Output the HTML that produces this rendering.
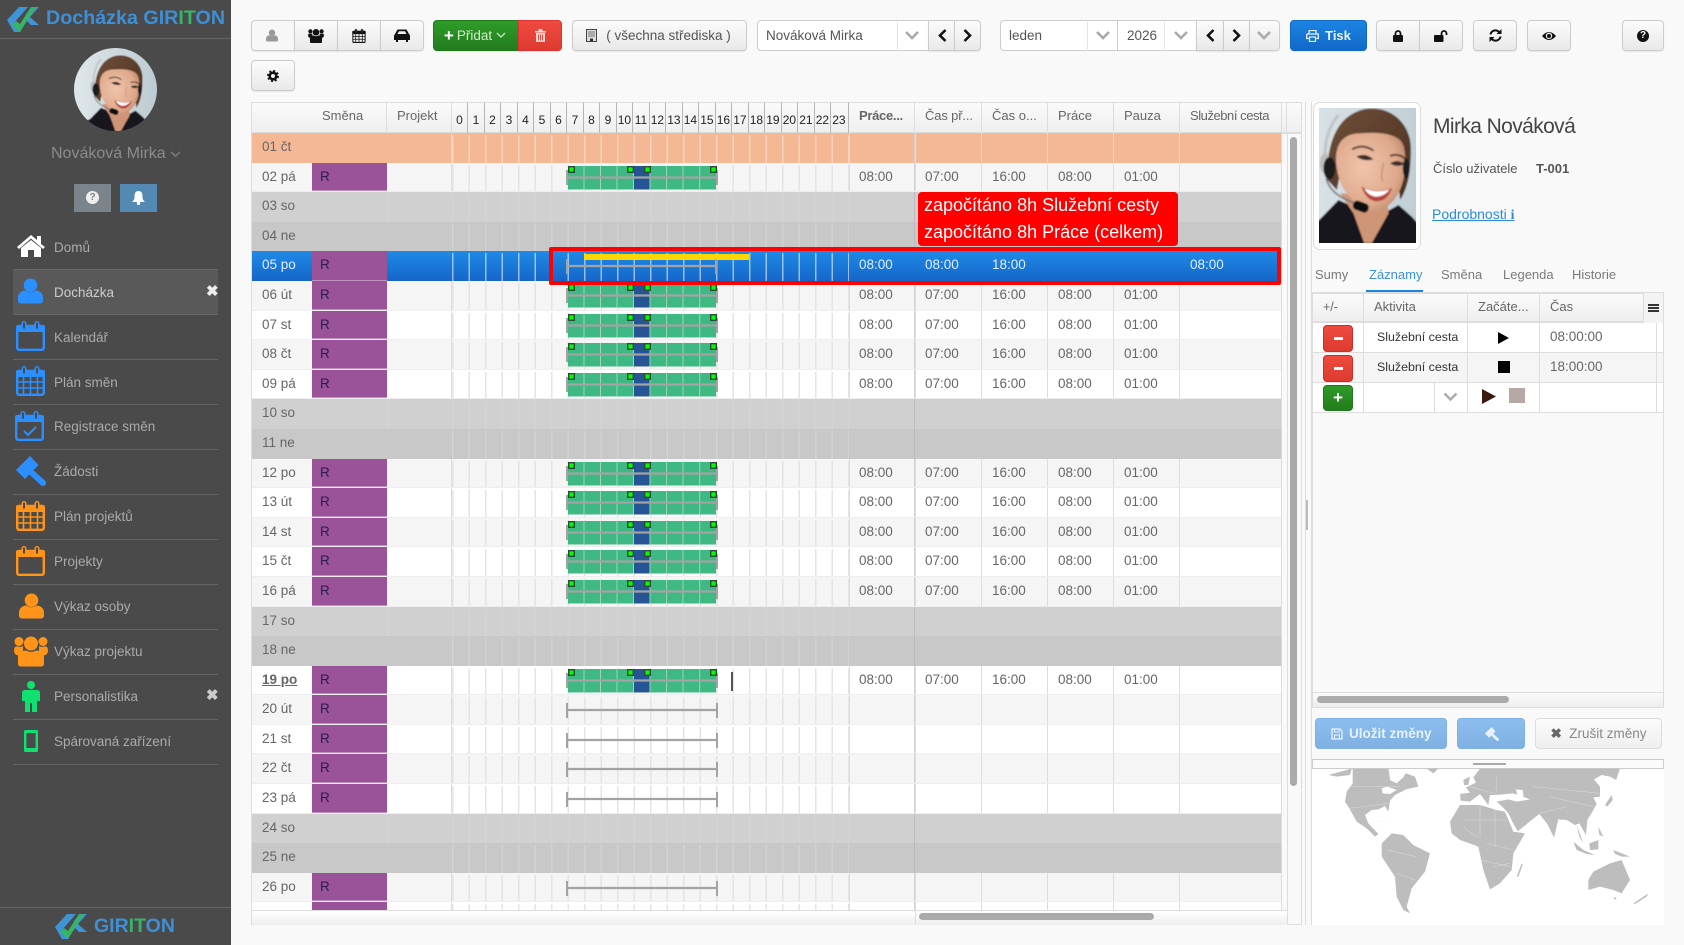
<!DOCTYPE html>
<html lang="cs"><head><meta charset="utf-8"><title>Docházka GIRITON</title>
<style>
*{box-sizing:border-box}
html,body{margin:0;padding:0;width:1684px;height:945px;overflow:hidden;background:#f9f9f9;font:13.5px "Liberation Sans",sans-serif;color:#555}
.a{position:absolute}
#side{position:absolute;left:0;top:0;width:231px;height:945px;background:#4a4a4a}
.nav{position:absolute;left:54px;color:#aaa;font-size:13.5px;line-height:18px;white-space:nowrap}
.dv{position:absolute;left:13px;width:205px;height:1px;background:#646464}
.ic{position:absolute}
.btn{position:absolute;top:20px;height:31px;background:linear-gradient(#fbfbfb,#e9e9e9);border:1px solid #ccc;border-radius:4px;box-shadow:0 1px 1px rgba(0,0,0,.08);display:flex;align-items:center;justify-content:center;color:#111}
.btn.l{border-radius:4px 0 0 4px}.btn.m{border-radius:0}.btn.rr{border-radius:0 4px 4px 0}
.inp{position:absolute;top:20px;height:31px;background:#fff;border:1px solid #ccc;color:#555;font-size:13.5px;line-height:29px;padding-left:8px}
.sep{position:absolute;top:1px;bottom:1px;width:1px;background:#e2e2e2}
.chev{position:absolute;fill:none;stroke:#aaa;stroke-width:2.6}
.th{position:absolute;top:102px;height:32px;background:linear-gradient(#fafafa,#efefef);border:1px solid #ddd;border-left:0;border-bottom:2px solid #ddd;font-size:13px;line-height:26px;color:#666;padding-left:10px;white-space:nowrap}
.hh{position:absolute;top:102px;height:32px;width:16.5px;background:linear-gradient(#fafafa,#efefef);border-top:1px solid #ddd;border-bottom:2px solid #ddd;border-right:1px solid #b5b5b5;font-size:12px;line-height:34px;color:#222;text-align:center}
#tb{position:absolute;left:252px;top:133px;width:1030px;height:777px;overflow:hidden}
.r{position:relative;height:29.6px;width:1030px;overflow:hidden}
.r::after{content:"";position:absolute;left:597px;top:0;bottom:0;width:433px;background:linear-gradient(#ddd,#ddd) 66px 0/1px 100% no-repeat,linear-gradient(#ddd,#ddd) 132px 0/1px 100% no-repeat,linear-gradient(#ddd,#ddd) 198px 0/1px 100% no-repeat,linear-gradient(#ddd,#ddd) 264px 0/1px 100% no-repeat,linear-gradient(#ddd,#ddd) 330px 0/1px 100% no-repeat,linear-gradient(#ddd,#ddd) 0 0/1px 100% no-repeat,linear-gradient(#d2d2d2,#d2d2d2) 65px 0/2px 100% no-repeat}
.a1{background:#f5f5f5}.b1{background:#fff}
.e1{background:#d0d0d0}.f1{background:#c8c8c8}.p1{background:#f5b895}
.a1,.b1{border-bottom:1px solid #eee}
.e1::after,.f1::after{background:linear-gradient(#bbb,#bbb) 65px 0/1px 100% no-repeat}
.s1{background:linear-gradient(#1f8ae6,#1566c9)}
.s1::after{background:none}
.d{position:absolute;left:10px;top:0;line-height:28px;font-size:13.5px;color:#666;font-weight:400}
.sc{position:absolute;left:60px;top:0;width:75px;height:100%;background:#9a5299;border-bottom:1px solid #c090be;color:#2a1a55;line-height:28px;padding-left:8px;font-size:13.5px;font-style:normal}
.h{position:absolute;left:199.7px;top:2px;bottom:0;width:397px;background:linear-gradient(90deg,#e4e4e4 1.6px,transparent 1.6px) 0 0/16.5px 100%}
.prj{position:absolute;left:135px;top:0;width:65px;height:100%;border-right:1px solid #ddd}
.e1 .h,.e1 .prj{background-image:linear-gradient(90deg,#d4d4d4 1.6px,transparent 1.6px);border:0}
.f1 .h{background-image:linear-gradient(90deg,#d2d2d2 1.6px,transparent 1.6px)}.f1 .prj{border:0}
.p1 .h{background-image:linear-gradient(90deg,#f9d3bd 1.6px,transparent 1.6px)}
.s1 .h{background-image:linear-gradient(90deg,rgba(255,255,255,.55) 1.4px,transparent 1.4px)}.s1 .prj{border:0}
.bar{position:absolute;left:314.5px;top:0;width:155px;height:30px;overflow:visible}
.t{position:absolute;top:0;line-height:28px;font-size:13.5px;color:#666;z-index:2}
.t1{left:607px}.t2{left:673px}.t3{left:740px}.t4{left:806px}.t5{left:872px}.t6{left:938px}
.s1 .t,.s1 .d{color:#dfeeff}
.tab{position:absolute;top:266px;font-size:13px;color:#7a7a7a;line-height:17px}
.pc{position:absolute;background:#fff;border-bottom:1px solid #ddd}
.pl{position:absolute;width:1px;background:#ddd}
.red{position:absolute;left:1323px;width:30px;height:27px;border-radius:4px;background:linear-gradient(#ee4a40,#dd3a30);border:1px solid #c9302c}
.red::after{content:"";position:absolute;left:10px;top:11px;width:9px;height:3px;background:#fff}
</style></head><body>
<svg width="0" height="0" style="position:absolute">
<defs>
<radialGradient id="sk" cx=".4" cy=".45" r=".7"><stop offset="0" stop-color="#f0c4ab"/><stop offset=".7" stop-color="#dea98c"/><stop offset="1" stop-color="#b98264"/></radialGradient>
<linearGradient id="bgp" x1="0" x2="1"><stop offset="0" stop-color="#e3eaed"/><stop offset="1" stop-color="#b8c8cf"/></linearGradient>
<linearGradient id="hr" x1="0" x2="1" y1="0" y2="1"><stop offset="0" stop-color="#6f4e38"/><stop offset="1" stop-color="#4a2f20"/></linearGradient>
<filter id="bl" x="-5%" y="-5%" width="110%" height="110%"><feGaussianBlur stdDeviation="2.5"/></filter>
<g id="woman"><g filter="url(#bl)">
<rect x="100" y="250" width="550" height="520" fill="url(#bgp)"/>
<path d="M100 770V720L237 660 295 600 340 620 385 700 430 640 475 615 515 650 560 700V770Z" fill="#14141a"/>
<path d="M300 580L440 590 445 640 395 729 372 729 340 640Z" fill="#cf9577"/>
<path d="M262 540C258 430 290 345 375 327 460 315 515 380 512 450 512 510 505 560 480 600L460 420 320 420 290 570Z" fill="url(#hr)"/>
<path d="M288 490C283 420 320 400 360 400 420 395 485 400 492 445 505 520 482 590 442 618 410 640 360 632 330 592 300 560 293 530 288 490Z" fill="url(#sk)"/>
<path d="M336 448Q368 430 400 452M450 468Q475 458 497 478" stroke="#5a3b2c" stroke-width="6" fill="none"/>
<path d="M348 470Q375 456 400 478 372 486 348 470ZM450 490Q472 476 494 492 470 504 450 490Z" fill="#3f2d27"/>
<path d="M430 490Q420 530 428 545" stroke="#c48d70" stroke-width="4" fill="none"/>
<path d="M364 560Q410 582 456 564 442 606 405 604 376 598 364 560Z" fill="#b8453f"/>
<path d="M372 565Q410 580 448 569 432 590 405 590 384 586 372 565Z" fill="#fff"/>
<path d="M295 345Q248 400 256 490" stroke="#c4c4c4" stroke-width="9" fill="none"/>
<ellipse cx="255" cy="490" rx="16" ry="30" fill="#bdbdbd"/>
<ellipse cx="268" cy="505" rx="18" ry="34" fill="#1c1c1c"/><ellipse cx="498" cy="505" rx="10" ry="30" fill="#1c1c1c"/>
<path d="M258 535Q270 585 345 610" stroke="#777" stroke-width="5" fill="none"/>
<rect x="338" y="606" width="48" height="28" rx="12" fill="#111" transform="rotate(20 362 620)"/>
</g></g>
<symbol id="u" viewBox="0 0 24 24"><circle cx="12" cy="6.5" r="6.5" fill="currentColor"/><path d="M0 21V18A7 7 0 0 1 7 11.5Q12 15 17 11.5A7 7 0 0 1 24 18V21Q24 24 21 24H3Q0 24 0 21Z" fill="currentColor"/></symbol>
<symbol id="cal" viewBox="0 0 29 30"><rect x="1.2" y="5" width="26.6" height="23.8" rx="2" fill="none" stroke="currentColor" stroke-width="2.4"/><rect y="4" width="29" height="7" rx="2" fill="currentColor"/><rect x="5.5" width="5" height="9" rx="2.5" fill="currentColor"/><rect x="18.5" width="5" height="9" rx="2.5" fill="currentColor"/><rect x="7" y="1.5" width="2" height="6" fill="#4a4a4a"/><rect x="20" y="1.5" width="2" height="6" fill="#4a4a4a"/></symbol>
<symbol id="calg" viewBox="0 0 29 30"><use href="#cal" width="29" height="30"/><path d="M7.5 11V28M14.5 11V28M21.5 11V28M2 16H27M2 22H27" stroke="currentColor" stroke-width="1.6"/></symbol>
<symbol id="gav" viewBox="0 0 30 30"><path d="M0 14L14 0 22.5 9 9 23Z" fill="currentColor"/><path d="M15 16L27 27" stroke="currentColor" stroke-width="6" stroke-linecap="round"/></symbol>
<symbol id="grp" viewBox="0 0 34 30"><circle cx="17" cy="7" r="7" fill="currentColor"/><circle cx="5" cy="5" r="4.5" fill="currentColor"/><circle cx="29" cy="5" r="4.5" fill="currentColor"/><path d="M0 14Q0 9 4 10 7 11 9 9.500L9 19H4Q0 18 0 14ZM34 14Q34 9 30 10 27 11 25 9.500L25 19H30Q34 18 34 14Z" fill="currentColor"/><path d="M4 27V20A8 8 0 0 1 12 14Q17 17 22 14A8 8 0 0 1 30 20V27Q30 30 27 30H7Q4 30 4 27Z" fill="currentColor"/></symbol>
<g id="bar">
<rect x="1" y="3" width="148" height="23.500" fill="#3fb983"/>
<rect x="67" y="3" width="15.600" height="23.500" fill="#265596"/>
<path d="M17 3V26.500M33.500 3V26.500M50 3V26.500M66.500 3V26.500M83 3V26.500M99.600 3V26.500M116 3V26.500M132.700 3V26.500" stroke="#9fd3b9" stroke-width="1"/>
<path d="M0 14.500H150" stroke="#a3a3a3" stroke-width="2.200"/>
<path d="M0 7V22M150 7V22" stroke="#a3a3a3" stroke-width="2"/>
<g fill="#0f0" stroke="#2d4a38" stroke-width="1.400"><rect x="1.700" y="3.700" width="5.600" height="5.600"/><rect x="60.700" y="3.700" width="5.600" height="5.600"/><rect x="77.700" y="3.700" width="5.600" height="5.600"/><rect x="143.700" y="3.700" width="5.600" height="5.600"/></g>
</g>
<g id="ln"><path d="M0 15H150" stroke="#a3a3a3" stroke-width="2.200"/><path d="M0 8V23M150 8V23" stroke="#a3a3a3" stroke-width="2"/></g>
<g id="lg"><path d="M0 13L12 0H21L7 16 14 25 7 25Z" fill="#3f94d6"/><path d="M19 7L25 0H32L23 10 32 18H24L18 12Z" fill="#3f94d6"/><path d="M5 18L13 25 29 0H24L13 17 9 14Z" fill="#37b36a"/><path d="M3 19L13 25H20L21 25H13Z" fill="#8fdcae"/></g>
</defs></svg>

<div id="side">
<svg class="ic" style="left:7px;top:7px" width="33" height="26" viewBox="0 0 33 26"><use href="#lg"/></svg>
<div class="a" style="left:46px;top:7px;font-size:19.700px;font-weight:700;color:#3f8fd6;white-space:nowrap;line-height:22px">Docházka GIR<span style="color:#37b36a">IT</span>ON</div>
<div class="a" style="left:0;top:38px;width:231px;height:1px;background:#666"></div>
<svg class="ic" style="left:74px;top:48px;border-radius:50%" width="83" height="83" viewBox="153 287 435 435"><use href="#woman"/></svg>
<div class="a" style="left:51px;top:144px;font-size:16px;color:#8b8b8b;line-height:20px;white-space:nowrap">Nováková Mirka</div>
<svg class="ic" style="left:170px;top:151px" width="11" height="7"><path d="M1 1L5.500 5 10 1" fill="none" stroke="#777" stroke-width="1.600"/></svg>
<div class="a" style="left:74px;top:184px;width:37px;height:28px;background:#7b838b"><div class="a" style="left:12px;top:7px;width:13px;height:13px;border-radius:50%;background:#eee;color:#7b838b;font:bold 10px/13px 'Liberation Sans',sans-serif;text-align:center">?</div></div>
<div class="a" style="left:120px;top:184px;width:37px;height:28px;background:#5389b3"><svg class="a" style="left:12px;top:7px" width="13" height="14" viewBox="0 0 13 14"><path d="M6.500 0C3 0 2.500 3 2.500 6S1 10 0 11H13C12 10 10.500 9 10.500 6S10 0 6.500 0Z" fill="#fff"/><circle cx="6.500" cy="12.300" r="1.700" fill="#fff"/></svg></div>

<svg class="ic" style="left:17px;top:235px" width="28" height="22" viewBox="0 0 28 22"><path d="M0 12L14 0 20 5V1H24V9L28 12 26 14 14 3.500 2 14Z" fill="#fff"/><path d="M4 13L14 5 24 13V22H17V15H11V22H4Z" fill="#fff"/></svg>
<div class="nav" style="top:239px">Domů</div>
<div class="a" style="left:13px;top:269px;width:205px;height:46px;background:#595959;border-top:1px solid #666;border-bottom:1px solid #666"></div>
<svg class="ic" style="left:18px;top:278px;color:#2b8fff" width="25" height="26"><use href="#u"/></svg>
<div class="nav" style="top:284px;color:#ccc">Docházka</div>
<div class="a" style="left:206px;top:283px;color:#eee;font:bold 15px/18px 'Liberation Sans',sans-serif">✖</div>

<svg class="ic" style="left:16px;top:321px;color:#2b8fff" width="29" height="30"><use href="#cal"/></svg>
<div class="nav" style="top:329px">Kalendář</div><div class="dv" style="top:359px"></div>
<svg class="ic" style="left:16px;top:366px;color:#2b8fff" width="29" height="30"><use href="#calg"/></svg>
<div class="nav" style="top:374px">Plán směn</div><div class="dv" style="top:404px"></div>
<svg class="ic" style="left:15px;top:411px;color:#2b8fff" width="29" height="30"><use href="#cal"/><path d="M9 20L13 24 21 16" fill="none" stroke="#2b8fff" stroke-width="2"/></svg>
<div class="nav" style="top:418px">Registrace směn</div><div class="dv" style="top:449px"></div>
<svg class="ic" style="left:16px;top:456px;color:#2b8fff" width="30" height="30"><use href="#gav"/></svg>
<div class="nav" style="top:463px">Žádosti</div><div class="dv" style="top:494px"></div>
<svg class="ic" style="left:16px;top:501px;color:#ff9419" width="29" height="30"><use href="#calg"/></svg>
<div class="nav" style="top:508px">Plán projektů</div><div class="dv" style="top:539px"></div>
<svg class="ic" style="left:16px;top:546px;color:#ff9419" width="29" height="30"><use href="#cal"/></svg>
<div class="nav" style="top:553px">Projekty</div><div class="dv" style="top:584px"></div>
<svg class="ic" style="left:19px;top:593px;color:#ff9419" width="25" height="26"><use href="#u"/></svg>
<div class="nav" style="top:598px">Výkaz osoby</div><div class="dv" style="top:629px"></div>
<svg class="ic" style="left:14px;top:636px;color:#ff9419" width="34" height="31"><use href="#grp"/></svg>
<div class="nav" style="top:643px">Výkaz projektu</div><div class="dv" style="top:674px"></div>
<svg class="ic" style="left:22px;top:681px" width="18" height="31" viewBox="0 0 18 31"><circle cx="9" cy="4" r="4" fill="#10e070"/><path d="M0 12Q0 9 3 9H15Q18 9 18 12V20H15V31H10V22H8V31H3V20H0Z" fill="#10e070"/></svg>
<div class="nav" style="top:688px">Personalistika</div>
<div class="a" style="left:206px;top:687px;color:#ccc;font:bold 15px/18px 'Liberation Sans',sans-serif">✖</div><div class="dv" style="top:719px"></div>
<svg class="ic" style="left:24px;top:730px" width="14" height="22" viewBox="0 0 14 22"><rect x="1.200" y="1.200" width="11.600" height="19.600" rx="2" fill="none" stroke="#10e070" stroke-width="2.400"/><rect y="0" width="14" height="3" rx="1.500" fill="#10e070"/><rect y="18" width="14" height="4" rx="1.500" fill="#10e070"/></svg>
<div class="nav" style="top:733px">Spárovaná zařízení</div><div class="dv" style="top:764px"></div>
<div class="a" style="left:0;top:907px;width:231px;height:1px;background:#666"></div>
<svg class="ic" style="left:55px;top:914px" width="33" height="26" viewBox="0 0 33 26"><use href="#lg"/></svg>
<div class="a" style="left:94px;top:914px;font-size:19.500px;font-weight:700;color:#3f8fd6;line-height:24px;white-space:nowrap">GIR<span style="color:#37b36a">IT</span>ON</div>
</div>

<!-- toolbar -->
<div class="btn l" style="left:251px;width:44px;background:#f7f7f7"><svg width="12" height="13" style="color:#999;margin-right:2px"><use href="#u"/></svg></div>
<div class="btn m" style="left:294px;width:44px"><svg width="16" height="14"><use href="#grp"/></svg></div>
<div class="btn m" style="left:337px;width:44px"><svg width="14" height="14"><use href="#calg"/></svg></div>
<div class="btn rr" style="left:380px;width:44px"><svg width="16" height="13" viewBox="0 0 16 13"><path d="M1 5L3.500 0.500H12.500L15 5Q16 6 16 7V11H14V13H12V11H4V13H2V11H0V7Q0 6 1 5ZM3.500 5H12.500L11 2.200H5Z" fill="#111" fill-rule="evenodd"/></svg></div>
<div class="btn l" style="left:433px;width:86px;background:linear-gradient(#2e9c28,#237c1e);border-color:#1e7a1a;color:#cdeec9;font-size:13.500px;padding-right:2px"><span style="color:#fff;font-weight:700;font-size:17px;margin-right:3px;line-height:14px">+</span>Přidat<svg width="10" height="7" style="margin-left:4px"><path d="M1 1L5 5 9 1" fill="none" stroke="#b8dcb5" stroke-width="1.500"/></svg></div>
<div class="btn rr" style="left:518px;width:44px;background:linear-gradient(#ee4a40,#dd3a30);border-color:#d33"><svg width="11" height="13" viewBox="0 0 11 13"><path d="M0 2H11V3.500H0ZM3.500 0H7.500V2H3.500ZM1 4H10V13H1Z" fill="#ffd8d5"/><path d="M3.500 5.500V11.500M5.500 5.500V11.500M7.500 5.500V11.500" stroke="#e04a40"/></svg></div>
<div class="btn" style="left:572px;width:175px;color:#555;font-size:13.500px;padding-right:2px"><svg width="11" height="13" viewBox="0 0 11 13" style="margin-right:9px"><rect x="0.500" y="0.500" width="10" height="12" fill="#ddd" stroke="#444"/><path d="M2 3H9M2 5H9M2 7H9" stroke="#777"/><rect x="4" y="9.500" width="3" height="3" fill="#333"/></svg>( všechna střediska )</div>

<div class="inp" style="left:757px;width:172px;border-radius:4px 0 0 4px">Nováková Mirka<div class="sep" style="left:139px"></div><svg class="chev" style="left:147px;top:10px" width="14" height="10"><path d="M1 1L7 7 13 1"/></svg></div>
<div class="btn m" style="left:928px;width:27px"><svg width="9" height="13" style="margin-left:1px"><path d="M7.500 1L2 6.500 7.500 12" fill="none" stroke="#111" stroke-width="2.600"/></svg></div>
<div class="btn rr" style="left:954px;width:27px"><svg width="9" height="13"><path d="M1.500 1L7 6.500 1.500 12" fill="none" stroke="#111" stroke-width="2.600"/></svg></div>

<div class="inp" style="left:1000px;width:118px;border-radius:4px 0 0 4px">leden<div class="sep" style="left:86px"></div><svg class="chev" style="left:95px;top:10px" width="14" height="10"><path d="M1 1L7 7 13 1"/></svg></div>
<div class="inp" style="left:1118px;width:79px;border-left:0;padding-left:9px">2026<div class="sep" style="left:46px"></div><svg class="chev" style="left:56px;top:10px" width="14" height="10"><path d="M1 1L7 7 13 1"/></svg></div>
<div class="btn m" style="left:1196px;width:28px"><svg width="9" height="13"><path d="M7.500 1L2 6.500 7.500 12" fill="none" stroke="#111" stroke-width="2.600"/></svg></div>
<div class="btn m" style="left:1223px;width:27px"><svg width="9" height="13" style="margin-right:1px"><path d="M1.500 1L7 6.500 1.500 12" fill="none" stroke="#111" stroke-width="2.600"/></svg></div>
<div class="btn rr" style="left:1249px;width:31px"><svg class="chev" style="position:static;margin-right:2px" width="14" height="10"><path d="M1 1L7 7 13 1"/></svg></div>

<div class="btn" style="left:1290px;width:77px;background:linear-gradient(#1c84e2,#1268c8);border-color:#1268c8;color:#e6f2ff;font-weight:700;font-size:13px"><svg width="13" height="12" viewBox="0 0 13 12" style="margin-right:6px"><path d="M3 .5H10V3.500M3 3.500V.5M0.700 4H12.300V8.500H10.200M2.800 8.500H.7V4" fill="none" stroke="#e6f2ff" stroke-width="1.300"/><rect x="3.500" y="7" width="6" height="4.500" fill="none" stroke="#e6f2ff" stroke-width="1.200"/></svg>Tisk</div>
<div class="btn l" style="left:1376px;width:44px"><svg width="10" height="12" viewBox="0 0 10 12"><path d="M2.500 5V3.500A2.500 2.500 0 0 1 7.500 3.500V5" fill="none" stroke="#111" stroke-width="1.800"/><rect y="5" width="10" height="7" rx="1" fill="#111"/></svg></div>
<div class="btn rr" style="left:1419px;width:44px"><svg width="14" height="12" viewBox="0 0 14 12"><path d="M7.500 5V3.500A2.500 2.500 0 0 1 12.500 3.500V5" fill="none" stroke="#111" stroke-width="1.800"/><rect y="5" width="9.500" height="7" rx="1" fill="#111"/></svg></div>
<div class="btn" style="left:1473px;width:44px"><svg width="13" height="13" viewBox="0 0 13 13"><path d="M1.500 5.500A5 5 0 0 1 10.300 3.200M11.500 7.500A5 5 0 0 1 2.700 9.800" fill="none" stroke="#111" stroke-width="2"/><path d="M12.500 0V5H7.500ZM0.500 13V8H5.500Z" fill="#111"/></svg></div>
<div class="btn" style="left:1527px;width:44px"><svg width="14" height="10" viewBox="0 0 14 10"><path d="M0 5Q7 -3 14 5 7 13 0 5Z" fill="#111"/><circle cx="7" cy="4.800" r="3.200" fill="#eee"/><circle cx="7" cy="5" r="2" fill="#111"/></svg></div>
<div class="btn" style="left:1622px;width:42px"><div style="width:12px;height:12px;border-radius:50%;background:#111;color:#fff;font:bold 10px/12px 'Liberation Sans',sans-serif;text-align:center">?</div></div>
<div class="btn" style="left:251px;top:60px;width:44px"><svg width="12" height="12" viewBox="0 0 12 12" style="margin-right:1px"><circle cx="6" cy="6" r="3.300" fill="none" stroke="#111" stroke-width="2.600"/><circle cx="6" cy="6" r="5" fill="none" stroke="#111" stroke-width="2" stroke-dasharray="2 1.930"/></svg></div>

<!-- table header -->
<div class="a" style="left:251px;top:102px;width:1051px;height:823px;border:1px solid #ddd;background:#f9f9f9"></div>
<div class="th" style="left:251px;width:61px;border-left:1px solid #ddd"></div>
<div class="th" style="left:311px;width:76px;padding-left:11px">Směna</div>
<div class="th" style="left:387px;width:65px">Projekt</div>
<div class="hh" style="left:451.700px">0</div><div class="hh" style="left:468.200px">1</div><div class="hh" style="left:484.700px">2</div><div class="hh" style="left:501.200px">3</div><div class="hh" style="left:517.700px">4</div><div class="hh" style="left:534.200px">5</div><div class="hh" style="left:550.700px">6</div><div class="hh" style="left:567.200px">7</div><div class="hh" style="left:583.700px">8</div><div class="hh" style="left:600.200px">9</div><div class="hh" style="left:616.700px">10</div><div class="hh" style="left:633.200px">11</div><div class="hh" style="left:649.700px">12</div><div class="hh" style="left:666.200px">13</div><div class="hh" style="left:682.700px">14</div><div class="hh" style="left:699.200px">15</div><div class="hh" style="left:715.700px">16</div><div class="hh" style="left:732.200px">17</div><div class="hh" style="left:748.700px">18</div><div class="hh" style="left:765.200px">19</div><div class="hh" style="left:781.700px">20</div><div class="hh" style="left:798.200px">21</div><div class="hh" style="left:814.700px">22</div><div class="hh" style="left:831.200px;width:18px;padding-right:1.500px">23</div>
<div class="th" style="left:849px;width:66px;font-weight:700;letter-spacing:-.3px">Práce...</div>
<div class="th" style="left:915px;width:67px;letter-spacing:-.15px">Čas př...</div>
<div class="th" style="left:982px;width:66px">Čas o...</div>
<div class="th" style="left:1048px;width:66px">Práce</div>
<div class="th" style="left:1114px;width:66px">Pauza</div>
<div class="th" style="left:1180px;width:102px;letter-spacing:-.45px">Služební cesta</div>
<div class="th" style="left:1282px;width:5px;padding:0"></div>
<div class="th" style="left:1287px;width:15px;padding:0"></div>

<div id="tb">
<div class="r p1"><span class="d">01 čt</span><div class="prj"></div><div class="h"></div></div>
<div class="r a1"><span class="d">02 pá</span><i class="sc">R</i><div class="prj"></div><div class="h"></div><svg class="bar" width="155" height="30"><use href="#bar"/></svg><span class="t t1">08:00</span><span class="t t2">07:00</span><span class="t t3">16:00</span><span class="t t4">08:00</span><span class="t t5">01:00</span></div>
<div class="r e1"><span class="d">03 so</span><div class="prj"></div><div class="h"></div></div>
<div class="r f1"><span class="d">04 ne</span><div class="prj"></div><div class="h"></div></div>
<div class="r s1"><span class="d">05 po</span><i class="sc">R</i><div class="prj"></div><div class="h"></div><span class="t t1">08:00</span><span class="t t2">08:00</span><span class="t t3">18:00</span><span class="t t6">08:00</span></div>
<div class="r a1"><span class="d">06 út</span><i class="sc">R</i><div class="prj"></div><div class="h"></div><svg class="bar" width="155" height="30"><use href="#bar"/></svg><span class="t t1">08:00</span><span class="t t2">07:00</span><span class="t t3">16:00</span><span class="t t4">08:00</span><span class="t t5">01:00</span></div>
<div class="r b1"><span class="d">07 st</span><i class="sc">R</i><div class="prj"></div><div class="h"></div><svg class="bar" width="155" height="30"><use href="#bar"/></svg><span class="t t1">08:00</span><span class="t t2">07:00</span><span class="t t3">16:00</span><span class="t t4">08:00</span><span class="t t5">01:00</span></div>
<div class="r a1"><span class="d">08 čt</span><i class="sc">R</i><div class="prj"></div><div class="h"></div><svg class="bar" width="155" height="30"><use href="#bar"/></svg><span class="t t1">08:00</span><span class="t t2">07:00</span><span class="t t3">16:00</span><span class="t t4">08:00</span><span class="t t5">01:00</span></div>
<div class="r b1"><span class="d">09 pá</span><i class="sc">R</i><div class="prj"></div><div class="h"></div><svg class="bar" width="155" height="30"><use href="#bar"/></svg><span class="t t1">08:00</span><span class="t t2">07:00</span><span class="t t3">16:00</span><span class="t t4">08:00</span><span class="t t5">01:00</span></div>
<div class="r e1"><span class="d">10 so</span><div class="prj"></div><div class="h"></div></div>
<div class="r f1"><span class="d">11 ne</span><div class="prj"></div><div class="h"></div></div>
<div class="r a1"><span class="d">12 po</span><i class="sc">R</i><div class="prj"></div><div class="h"></div><svg class="bar" width="155" height="30"><use href="#bar"/></svg><span class="t t1">08:00</span><span class="t t2">07:00</span><span class="t t3">16:00</span><span class="t t4">08:00</span><span class="t t5">01:00</span></div>
<div class="r b1"><span class="d">13 út</span><i class="sc">R</i><div class="prj"></div><div class="h"></div><svg class="bar" width="155" height="30"><use href="#bar"/></svg><span class="t t1">08:00</span><span class="t t2">07:00</span><span class="t t3">16:00</span><span class="t t4">08:00</span><span class="t t5">01:00</span></div>
<div class="r a1"><span class="d">14 st</span><i class="sc">R</i><div class="prj"></div><div class="h"></div><svg class="bar" width="155" height="30"><use href="#bar"/></svg><span class="t t1">08:00</span><span class="t t2">07:00</span><span class="t t3">16:00</span><span class="t t4">08:00</span><span class="t t5">01:00</span></div>
<div class="r b1"><span class="d">15 čt</span><i class="sc">R</i><div class="prj"></div><div class="h"></div><svg class="bar" width="155" height="30"><use href="#bar"/></svg><span class="t t1">08:00</span><span class="t t2">07:00</span><span class="t t3">16:00</span><span class="t t4">08:00</span><span class="t t5">01:00</span></div>
<div class="r a1"><span class="d">16 pá</span><i class="sc">R</i><div class="prj"></div><div class="h"></div><svg class="bar" width="155" height="30"><use href="#bar"/></svg><span class="t t1">08:00</span><span class="t t2">07:00</span><span class="t t3">16:00</span><span class="t t4">08:00</span><span class="t t5">01:00</span></div>
<div class="r e1"><span class="d">17 so</span><div class="prj"></div><div class="h"></div></div>
<div class="r f1"><span class="d">18 ne</span><div class="prj"></div><div class="h"></div></div>
<div class="r b1"><span class="d" style="font-weight:700;text-decoration:underline">19 po</span><i class="sc">R</i><div class="prj"></div><div class="h"></div><svg class="bar" width="155" height="30"><use href="#bar"/></svg><div class="a" style="left:479px;top:6px;width:2px;height:19px;background:#555"></div><span class="t t1">08:00</span><span class="t t2">07:00</span><span class="t t3">16:00</span><span class="t t4">08:00</span><span class="t t5">01:00</span></div>
<div class="r a1"><span class="d">20 út</span><i class="sc">R</i><div class="prj"></div><div class="h"></div><svg class="bar" width="155" height="30"><use href="#ln"/></svg></div>
<div class="r b1"><span class="d">21 st</span><i class="sc">R</i><div class="prj"></div><div class="h"></div><svg class="bar" width="155" height="30"><use href="#ln"/></svg></div>
<div class="r a1"><span class="d">22 čt</span><i class="sc">R</i><div class="prj"></div><div class="h"></div><svg class="bar" width="155" height="30"><use href="#ln"/></svg></div>
<div class="r b1"><span class="d">23 pá</span><i class="sc">R</i><div class="prj"></div><div class="h"></div><svg class="bar" width="155" height="30"><use href="#ln"/></svg></div>
<div class="r e1"><span class="d">24 so</span><div class="prj"></div><div class="h"></div></div>
<div class="r f1"><span class="d">25 ne</span><div class="prj"></div><div class="h"></div></div>
<div class="r a1"><span class="d">26 po</span><i class="sc">R</i><div class="prj"></div><div class="h"></div><svg class="bar" width="155" height="30"><use href="#ln"/></svg></div>
<div class="r b1"><i class="sc"></i><div class="prj"></div><div class="h"></div></div>
</div>

<!-- selected row overlays -->
<svg class="a" style="left:566px;top:253px" width="190" height="24"><rect x="18" y="1" width="165" height="6" fill="#ffd800"/><path d="M0 13H150" stroke="#a3a3a3" stroke-width="2.200"/><path d="M1 6V21M150 6V21" stroke="#a3a3a3" stroke-width="2"/></svg>
<div class="a" style="left:549px;top:247px;width:732px;height:38px;border:4px solid #f00;border-radius:2px"></div>
<div class="a" style="left:918px;top:192px;width:260px;height:54px;background:#f00;border-radius:4px;color:#fff;font:18px/26.800px 'Liberation Sans',sans-serif;padding:0 0 0 6px;white-space:nowrap">započítáno 8h Služební cesty<br>započítáno 8h Práce (celkem)</div>

<!-- scrollbars -->
<div class="a" style="left:1281px;top:134px;width:1px;height:776px;background:#ddd"></div>
<div class="a" style="left:1287px;top:134px;width:1px;height:791px;background:#ddd"></div>
<div class="a" style="left:1290px;top:137px;width:7px;height:649px;background:#aaa;border-radius:4px"></div>
<div class="a" style="left:252px;top:910px;width:1035px;height:15px;background:linear-gradient(#fff,#eee);border-top:1px solid #ddd"></div>
<div class="a" style="left:915px;top:910px;width:1px;height:15px;background:#ddd"></div>
<div class="a" style="left:919px;top:913px;width:235px;height:7px;background:#aaa;border-radius:4px"></div>
<div class="a" style="left:1305px;top:102px;width:1px;height:823px;background:#ddd"></div>
<div class="a" style="left:1306px;top:500px;width:2px;height:30px;background:#bbb"></div>
<div class="a" style="left:1311px;top:102px;width:1px;height:823px;background:#ddd"></div>

<!-- right panel -->
<div class="a" style="left:1313px;top:102px;width:108px;height:148px;background:#fff;border:1px solid #ddd;border-radius:7px"></div>
<svg class="a" style="left:1319px;top:108px" width="97" height="135" viewBox="237 324 290 405"><use href="#woman"/></svg>
<div class="a" style="left:1433px;top:113px;font-size:21px;color:#444;line-height:28px;white-space:nowrap;letter-spacing:-.6px">Mirka Nováková</div>
<div class="a" style="left:1433px;top:160px;font-size:13px;color:#555;line-height:17px">Číslo uživatele</div>
<div class="a" style="left:1536px;top:160px;font-size:13px;font-weight:700;color:#555;line-height:17px">T-001</div>
<div class="a" style="left:1432px;top:206px;font-size:14px;color:#2a8ae0;line-height:17px;text-decoration:underline;white-space:nowrap">Podrobnosti <b style="font-family:'Liberation Serif',serif">i</b></div>
<div class="tab" style="left:1315px">Sumy</div><div class="tab" style="left:1369px;color:#3c90e0">Záznamy</div><div class="tab" style="left:1441px">Směna</div><div class="tab" style="left:1503px">Legenda</div><div class="tab" style="left:1572px">Historie</div>
<div class="a" style="left:1366px;top:290px;width:57px;height:2px;background:#1c84e2"></div>

<div class="a" style="left:1312px;top:292px;width:352px;height:416px;border:1px solid #ddd;background:#f9f9f9"></div>
<div class="th" style="left:1313px;top:293px;width:51px;height:30px;line-height:26px;font-size:12.500px">+/-</div>
<div class="th" style="left:1364px;top:293px;width:104px;height:30px;line-height:26px">Aktivita</div>
<div class="th" style="left:1468px;top:293px;width:72px;height:30px;line-height:26px">Začáte...</div>
<div class="th" style="left:1540px;top:293px;width:123px;height:30px;line-height:26px">Čas</div>
<div class="a" style="left:1643px;top:293px;width:20px;height:31px;background:#f3f3f3;border:1px solid #ddd;border-width:0 0 1px 1px"><div class="a" style="left:4px;top:11px;width:11px;height:8px;border-top:2px solid #333;border-bottom:2px solid #333"></div><div class="a" style="left:4px;top:14px;width:11px;height:2px;background:#333"></div></div>
<div class="pc" style="left:1313px;top:323px;width:350px;height:30px;background:#fff"></div>
<div class="pc" style="left:1313px;top:353px;width:350px;height:30px;background:#f5f5f5"></div>
<div class="pc" style="left:1313px;top:383px;width:350px;height:30px;background:#fff"></div>
<div class="pl" style="left:1363px;top:323px;height:90px"></div><div class="pl" style="left:1467px;top:323px;height:90px"></div><div class="pl" style="left:1539px;top:323px;height:90px"></div><div class="pl" style="left:1656px;top:323px;height:90px"></div><div class="pl" style="left:1434px;top:383px;height:30px"></div>
<div class="red" style="top:325px"></div><div class="red" style="top:355px"></div>
<div class="a" style="left:1323px;top:385px;width:30px;height:26px;border-radius:4px;background:linear-gradient(#2e9c28,#237c1e);border:1px solid #1e7a1a;color:#fff;font:bold 17px/23px 'Liberation Sans',sans-serif;text-align:center">+</div>
<div class="a" style="left:1377px;top:329px;font-size:12.400px;color:#333;line-height:17px;white-space:nowrap">Služební cesta</div>
<div class="a" style="left:1377px;top:359px;font-size:12.400px;color:#333;line-height:17px;white-space:nowrap">Služební cesta</div>
<svg class="a" style="left:1498px;top:332px" width="12" height="12"><path d="M0 0L11 6 0 12Z" fill="#000"/></svg>
<div class="a" style="left:1498px;top:361px;width:12px;height:12px;background:#000"></div>
<svg class="a" style="left:1443px;top:392px" width="15" height="10"><path d="M1.500 1.500L7.500 7.500 13.500 1.500" fill="none" stroke="#aaa" stroke-width="2.400"/></svg>
<svg class="a" style="left:1482px;top:389px" width="14" height="15"><path d="M0 0L14 7.500 0 15Z" fill="#3a1a0a"/></svg>
<div class="a" style="left:1509px;top:388px;width:16px;height:15px;background:#b5a8a5"></div>
<div class="a" style="left:1550px;top:328px;font-size:13.500px;color:#666;line-height:17px">08:00:00</div>
<div class="a" style="left:1550px;top:358px;font-size:13.500px;color:#666;line-height:17px">18:00:00</div>
<div class="a" style="left:1313px;top:692px;width:350px;height:15px;background:linear-gradient(#fafafa,#eee);border-top:1px solid #ddd"></div>
<div class="a" style="left:1317px;top:696px;width:192px;height:7px;background:#aaa;border-radius:4px"></div>

<div class="a" style="left:1315px;top:718px;width:132px;height:31px;background:linear-gradient(#8cbeee,#7eb0e2);border:1px solid #7fb0e4;border-radius:4px;color:#e8f2fc;font-weight:700;font-size:13.500px;line-height:29px;padding-left:33px;white-space:nowrap"><svg class="a" style="left:15px;top:9px" width="12" height="12" viewBox="0 0 12 12"><path d="M1 1H9L11 3V11H1Z" fill="none" stroke="#e8f2fc" stroke-width="1.300"/><path d="M3.500 1V4H8V1M3.500 11V7H8.500V11" fill="none" stroke="#e8f2fc" stroke-width="1"/></svg>Uložit změny</div>
<div class="a" style="left:1457px;top:718px;width:68px;height:31px;background:linear-gradient(#8cbeee,#7eb0e2);border:1px solid #7fb0e4;border-radius:4px"><svg class="a" style="left:27px;top:8px;color:#e8f2fc" width="14" height="14"><use href="#gav"/></svg></div>
<div class="a" style="left:1535px;top:718px;width:127px;height:31px;background:linear-gradient(#fbfbfb,#efefef);border:1px solid #ddd;border-radius:4px;color:#888;font-size:13.500px;line-height:29px;text-align:center;white-space:nowrap"><b style="color:#666">✖</b>&nbsp; Zrušit změny</div>

<div class="a" style="left:1312px;top:759px;width:352px;height:10px;border:1px solid #ccc;background:#fbfbfb"></div>
<div class="a" style="left:1473px;top:763px;width:33px;height:2px;background:#aaa"></div>
<div class="a" style="left:1312px;top:769px;width:352px;height:156px;background:#fff"></div>
<svg class="a" style="left:1300px;top:680px;overflow:hidden" width="384" height="245" viewBox="0 0 1152 735">
<clipPath id="mc"><rect x="36" y="266" width="1056" height="469"/></clipPath>
<g clip-path="url(#mc)" fill="#bdbdbd">
<path d="M85 285L155 266 150 285 110 290Z"/>
<path d="M158 266H265L270 290 300 300 318 280 345 290 355 320 318 328 285 345 270 362 265 395 255 378 235 388 215 390 195 405 205 430 235 462 225 470 200 445 170 425 148 385 135 365 140 335 158 310Z"/>
<path d="M268 280L300 272 312 290 290 310 270 300Z" fill="#fff"/>
<path d="M245 325L262 320 290 330 270 342 248 340Z" fill="#fff"/>
<path d="M225 420L270 430 245 424Z"/><path d="M380 266H415L400 280Z"/>
<path d="M245 490L275 460 310 465 340 495 390 520 375 575 335 625 320 680 330 700 310 690 290 650 285 590 245 530Z"/>
<path d="M482 362L480 342 510 338 498 322 528 308 520 292 540 266H960L948 300 930 290 905 285 882 298 900 320 900 350 880 352 890 372 880 390 862 420 858 465 838 430 825 435 800 420 775 418 762 472 742 432 718 402 695 420 652 455 625 400 612 385 590 365 625 358 650 365 690 358 640 340 590 345 570 345 565 375 540 342 510 365Z"/>
<path d="M648 328L668 330 672 362 655 358Z" fill="#fff"/>
<path d="M450 425L480 375 540 375 590 390 615 395 640 455 675 460 640 520 635 570 600 610 570 628 550 570 535 500 480 480 455 460Z"/>
<path d="M616 395L652 455" stroke="#fff" stroke-width="4" fill="none"/>
<path d="M830 435L850 490 838 470Z"/>
<path d="M650 590L665 550 668 555 655 590Z"/><path d="M490 300L510 290 505 315 492 315Z"/>
<path d="M820 485L850 510 885 525 860 522 830 510Z"/><path d="M868 490L895 480 895 508 870 510Z"/><path d="M940 510L990 530 965 530 945 522Z"/><path d="M895 440L910 470 898 465Z"/><path d="M915 375L935 345 938 360 922 380Z"/>
<path d="M865 600L880 575 930 550 965 540 990 600 965 640 940 630 900 620 865 630Z"/>
<path d="M1000 670L1045 640 1040 650 1005 672Z"/><path d="M940 653L950 653 945 660Z"/>
<path d="M150 320H300M150 385L265 370M490 420H620M540 375V470M585 390V500M490 440L535 475M560 490L640 510M580 560L630 550M700 320L900 340M750 350L880 380M720 400L800 380M260 510L350 530M290 580L345 600M540 540L630 560M510 320L600 345M590 290V335" stroke="#dcdcdc" stroke-width="1.500" fill="none"/>
</g></svg>
</body></html>
